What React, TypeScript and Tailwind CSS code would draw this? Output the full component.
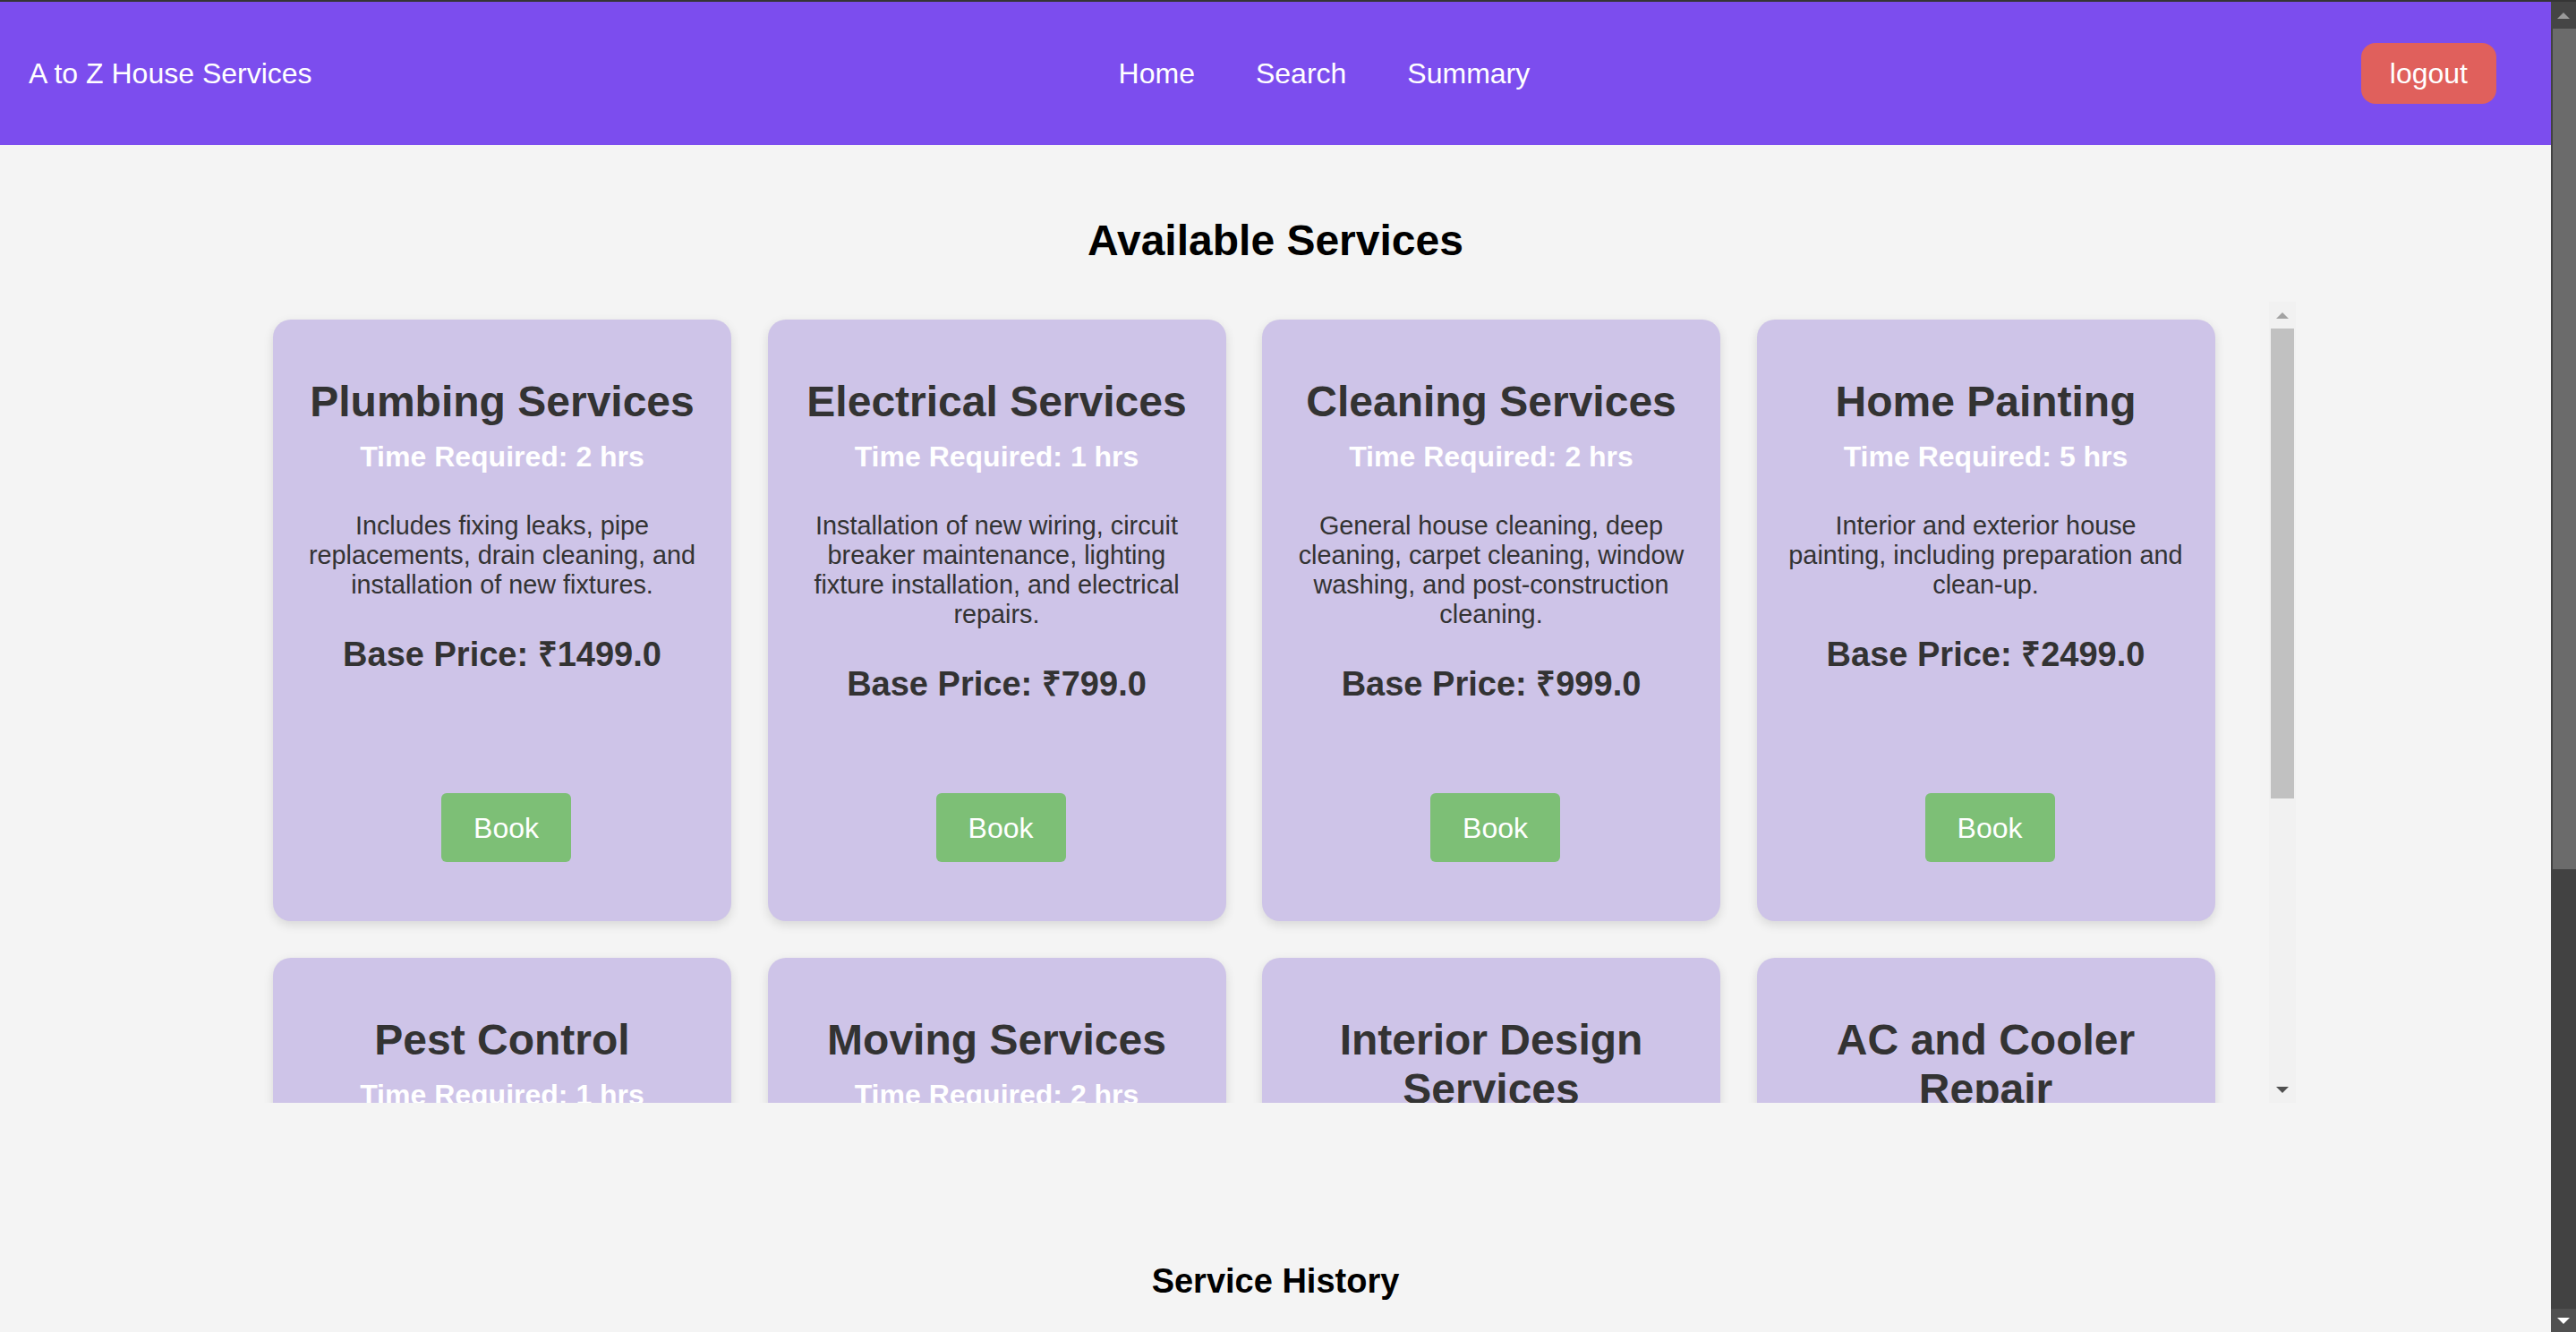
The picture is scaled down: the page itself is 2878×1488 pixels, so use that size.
import React from "react";

interface Service {
  name: string;
  time: number;
  desc: string;
  price: string;
}

const services: Service[] = [
  {
    name: "Plumbing Services",
    time: 2,
    desc: "Includes fixing leaks, pipe replacements, drain cleaning, and installation of new fixtures.",
    price: "1499.0",
  },
  {
    name: "Electrical Services",
    time: 1,
    desc: "Installation of new wiring, circuit breaker maintenance, lighting fixture installation, and electrical repairs.",
    price: "799.0",
  },
  {
    name: "Cleaning Services",
    time: 2,
    desc: "General house cleaning, deep cleaning, carpet cleaning, window washing, and post-construction cleaning.",
    price: "999.0",
  },
  {
    name: "Home Painting",
    time: 5,
    desc: "Interior and exterior house painting, including preparation and clean-up.",
    price: "2499.0",
  },
  {
    name: "Pest Control",
    time: 1,
    desc: "Treatment for termites, cockroaches, bed bugs and other household pests.",
    price: "899.0",
  },
  {
    name: "Moving Services",
    time: 2,
    desc: "Packing, loading, transport and unpacking of household goods.",
    price: "1999.0",
  },
  {
    name: "Interior Design Services",
    time: 4,
    desc: "Space planning, furniture selection and decor consultation for your home.",
    price: "2999.0",
  },
  {
    name: "AC and Cooler Repair",
    time: 2,
    desc: "Servicing, gas refilling and repair of air conditioners and coolers.",
    price: "699.0",
  },
];

const Arrow = ({ up, color }: { up?: boolean; color: string }) => (
  <svg width="14" height="7" viewBox="0 0 14 7">
    <polygon points={up ? "0,7 7,0 14,7" : "0,0 14,0 7,7"} fill={color} />
  </svg>
);

const ServiceCard = ({ s }: { s: Service }) => (
  <div className="w-[512px] h-[672px] shrink-0 rounded-[20px] bg-[#cec4e8] shadow-[0_4px_12px_rgba(0,0,0,0.12)] px-[32px] flex flex-col items-center text-center">
    <h2 className="mt-[64px] text-[48px] leading-[55px] font-bold text-[#333333]">
      {s.name}
    </h2>
    <h3 className="mt-[16px] text-[32px] leading-[37px] font-bold text-white">
      Time Required: {s.time} hrs
    </h3>
    <p className="mt-[42px] text-[28.8px] leading-[33px] text-[#333333]">
      {s.desc}
    </p>
    <p className="mt-[39px] text-[38px] leading-[44px] font-bold text-[#333333]">
      Base Price: ₹{s.price}
    </p>
    <button className="mt-auto mb-[66px] ml-[9px] w-[145px] h-[77px] rounded-[6px] bg-[#7dbf76] text-white text-[32px]">
      Book
    </button>
  </div>
);

export default function App() {
  return (
    <div className="h-screen flex flex-col overflow-hidden font-['Liberation_Sans',Arial,sans-serif]">
      <div className="h-[2px] bg-[#353535] shrink-0" />
      <div className="flex flex-1 min-h-0">
        {/* Page */}
        <div className="flex-1 bg-[#f4f4f4] overflow-hidden">
          {/* Header */}
          <div className="h-[160px] bg-[#7c4dee] flex items-center pl-[32px] pr-[61px]">
            <div className="text-[32px] leading-[37px] text-white">
              A to Z House Services
            </div>
            <nav className="ml-[901px] flex gap-[68px] text-[32px] leading-[37px] text-white">
              <a>Home</a>
              <a>Search</a>
              <a>Summary</a>
            </nav>
            <button className="ml-auto h-[68px] px-[32px] rounded-[16px] bg-[#e0605c] text-white text-[32px]">
              logout
            </button>
          </div>

          <h1 className="mt-[79px] text-center text-[48px] leading-[55px] font-bold text-black">
            Available Services
          </h1>

          {/* Services scroll box */}
          <div className="mt-[41px] w-[2280px] h-[895px] mx-auto flex">
            <div className="flex-1 overflow-hidden p-[20px]">
              <div className="flex flex-wrap gap-x-[40.5px] gap-y-[41px]">
                {services.map((s) => (
                  <ServiceCard key={s.name} s={s} />
                ))}
              </div>
            </div>
            <div className="w-[30px] bg-[#f1f1f1] flex flex-col">
              <div className="h-[30px] flex items-center justify-center">
                <Arrow up color="#a3a3a3" />
              </div>
              <div className="mx-[2px] h-[525px] bg-[#c1c1c1]" />
              <div className="flex-1" />
              <div className="h-[30px] flex items-center justify-center">
                <Arrow color="#505050" />
              </div>
            </div>
          </div>

          <h2 className="mt-[177px] text-center text-[38px] leading-[44px] font-bold text-black">
            Service History
          </h2>
        </div>

        {/* Window scrollbar */}
        <div className="w-[28px] bg-[#424242] flex flex-col">
          <div className="h-[30px] bg-[#454545] flex items-center justify-center">
            <Arrow up color="#9a9a9a" />
          </div>
          <div className="ml-[2px] h-[939px] bg-[#6b6b6b]" />
          <div className="flex-1" />
          <div className="h-[26px] bg-[#505050] flex items-center justify-center">
            <Arrow color="#ffffff" />
          </div>
        </div>
      </div>
    </div>
  );
}
